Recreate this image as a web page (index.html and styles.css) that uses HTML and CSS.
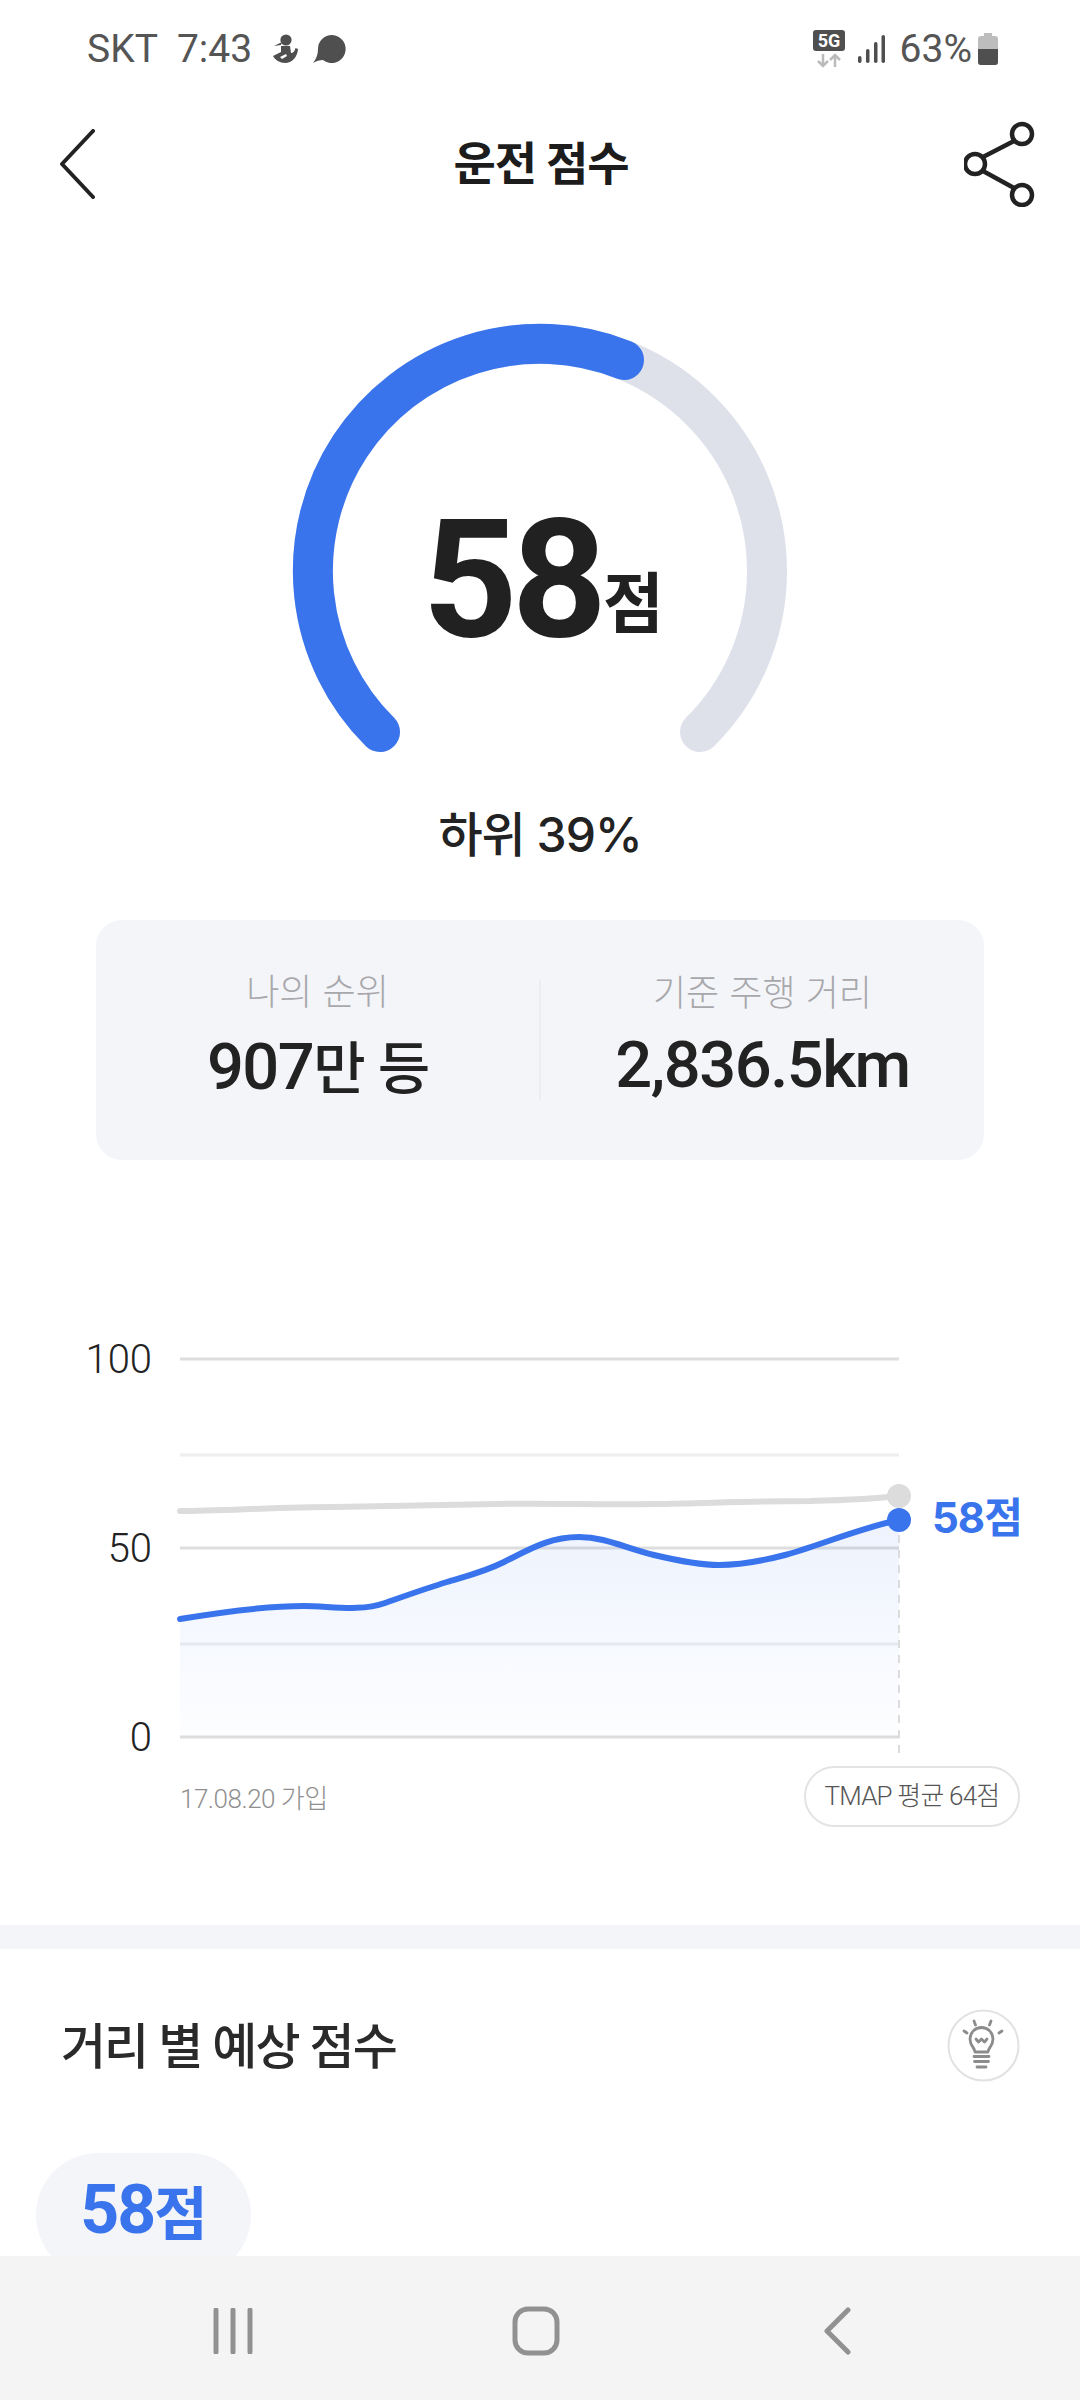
FILE: index.html
```html
<!DOCTYPE html>
<html lang="ko">
<head>
    <meta charset="UTF-8">
    <meta name="viewport" content="width=device-width, initial-scale=1.0">
    <title>운전 점수</title>
    <link rel="stylesheet" href="styles.css">
</head>
<body>
    <div class="screen">
        <div class="status">
            <div class="status-left">
                <span class="carrier">SKT</span>
                <span class="clock">7:43</span>
                <svg class="ico-person" width="26" height="30" viewBox="0 0 26 30">
                    <circle cx="14" cy="6" r="5.6" fill="#4f4f4f"/>
                    <path d="M10 8 L2 12 L9 11 Z" fill="#4f4f4f"/>
                    <path d="M9 12 H18 L19 19 C21 19 23 17 23.500 14 L26 15 C25.500 23 20 29 13 29 C8 29 3 26 1 22 L9 18 Z" fill="#4f4f4f"/>
                    <path d="M8 23 L14 20 L15 22 L10 25 Z" fill="#fff"/>
                </svg>
                <svg class="ico-bubble" width="34" height="30" viewBox="0 0 34 30">
                    <path d="M19 1 A14 14 0 1 1 10 26 C7 26 3 27 0 29 C3 25 5 21 5 15 A14 14 0 0 1 19 1 Z" fill="#4f4f4f"/>
                </svg>
            </div>
            <div class="status-right">
                <svg class="ico-5g" width="32" height="38" viewBox="0 0 32 38">
                    <rect x="0" y="0" width="32" height="21" rx="3" fill="#4f4f4f"/>
                    <text x="16" y="17" text-anchor="middle" class="net-label">5G</text>
                    <path d="M10 24 V36 M5 31 L10 36 L15 31" fill="none" stroke="#bbb" stroke-width="2.500"/>
                    <path d="M22 37 V25 M17 30 L22 25 L27 30" fill="none" stroke="#bbb" stroke-width="2.500"/>
                </svg>
                <svg class="ico-signal" width="27" height="30" viewBox="0 0 27 30">
                    <rect x="0" y="22" width="3.500" height="7" rx="1.700" fill="#4f4f4f"/>
                    <rect x="8" y="15" width="3.500" height="14" rx="1.700" fill="#4f4f4f"/>
                    <rect x="16" y="8" width="3.500" height="21" rx="1.700" fill="#4f4f4f"/>
                    <rect x="23.500" y="1" width="3.500" height="28" rx="1.700" fill="#4f4f4f"/>
                </svg>
                <span class="battery-pct">63%</span>
                <svg class="ico-battery" width="20" height="32" viewBox="0 0 20 32">
                    <path d="M6 0 H14 V3 H17 Q20 3 20 6 V29 Q20 32 17 32 H3 Q0 32 0 29 V6 Q0 3 3 3 H6 Z" fill="#bdbdbd"/>
                    <path d="M0 16 H20 V29 Q20 32 17 32 H3 Q0 32 0 29 Z" fill="#4f4f4f"/>
                </svg>
            </div>
        </div>

        <div class="topbar">
            <svg class="ico-back" width="37" height="70" viewBox="0 0 37 70">
                <path d="M34 2 L3 35 L34 68" fill="none" stroke="#222" stroke-width="4" stroke-linecap="round" stroke-linejoin="round"/>
            </svg>
            <h1 class="title">운전 점수</h1>
            <svg class="ico-share" width="72" height="86" viewBox="0 0 72 86">
                <circle cx="58" cy="13" r="10" fill="none" stroke="#222" stroke-width="4.500"/>
                <circle cx="11" cy="43" r="10" fill="none" stroke="#222" stroke-width="4.500"/>
                <circle cx="58" cy="74" r="10" fill="none" stroke="#222" stroke-width="4.500"/>
                <path d="M19 36 L50 20 M19 50 L50 67" fill="none" stroke="#222" stroke-width="4.500"/>
            </svg>
        </div>

        <div class="main">
            <div class="gauge">
                <svg width="520" height="470" viewBox="280 310 520 470">
                    <path d="M380 732 A227 227 0 1 1 700 732" fill="none" stroke="#dee1ea" stroke-width="40" stroke-linecap="round"/>
                    <path d="M380 732 A227 227 0 0 1 624 360" fill="none" stroke="#3974ed" stroke-width="40" stroke-linecap="round"/>
                </svg>
                <div class="gauge-score"><span class="score-num">58</span><span class="score-unit">점</span></div>
            </div>
            <div class="rank">하위 39%</div>

            <div class="card">
                <div class="card-col">
                    <div class="card-label">나의 순위</div>
                    <div class="card-value">907<span class="kr">만 등</span></div>
                </div>
                <div class="card-line"></div>
                <div class="card-col">
                    <div class="card-label">기준 주행 거리</div>
                    <div class="card-value">2,836.5km</div>
                </div>
            </div>

            <svg class="chart" width="1080" height="510" viewBox="0 1330 1080 510">
                <defs>
                    <linearGradient id="areaFill" x1="0" y1="0" x2="0" y2="1">
                        <stop offset="0" stop-color="#3974ed" stop-opacity="0.09"/>
                        <stop offset="1" stop-color="#3974ed" stop-opacity="0.01"/>
                    </linearGradient>
                </defs>
                <path class="grid" d="M180 1359 H899 M180 1548 H899 M180 1737 H899"/>
                <path class="grid-soft" d="M180 1455 H899 M180 1644 H899"/>
                <path class="area" d="M180 1619 C222 1612 265 1606 304 1606 C330 1606 360 1612 385 1603 C405 1596 427 1588 447 1582 C467 1576 484 1572 504 1562 C530 1549 550 1537 579 1537 C605 1537 625 1548 654 1555 C675 1560 697 1565 719 1565 C742 1565 762 1561 785 1555 C815 1547 860 1528 899 1520 V1737 H180 Z"/>
                <path class="dash" d="M899 1520 V1760"/>
                <path class="line-avg" d="M180 1511 C220 1511 280 1507 335 1507 C400 1506 450 1505 497 1504 C550 1503 600 1505 654 1504 C710 1503 760 1501 810 1501 C850 1500 875 1499 899 1496"/>
                <path class="line-me" d="M180 1619 C222 1612 265 1606 304 1606 C330 1606 360 1612 385 1603 C405 1596 427 1588 447 1582 C467 1576 484 1572 504 1562 C530 1549 550 1537 579 1537 C605 1537 625 1548 654 1555 C675 1560 697 1565 719 1565 C742 1565 762 1561 785 1555 C815 1547 860 1528 899 1520"/>
                <circle cx="899" cy="1496" r="12" fill="#dcdcdc"/>
                <circle cx="899" cy="1520" r="12" fill="#3974ed"/>
                <text class="axis" x="152" y="1373">100</text>
                <text class="axis" x="152" y="1562">50</text>
                <text class="axis" x="152" y="1751">0</text>
                <text class="me-label" x="932" y="1533">58점</text>
                <text class="joined" x="180" y="1808">17.08.20 가입</text>
                <rect class="avg-pill" x="805" y="1767" width="214" height="59" rx="29.500"/>
                <text class="avg-text" x="912" y="1805">TMAP 평균 64점</text>
            </svg>

            <div class="band"></div>

            <div class="section-head">
                <h2 class="section-title">거리 별 예상 점수</h2>
                <svg class="ico-bulb" width="73" height="73" viewBox="0 0 73 73">
                    <circle cx="36.500" cy="36.500" r="35" fill="#fff" stroke="#e2e2e2" stroke-width="2"/>
                    <g fill="none" stroke="#8c8c8c" stroke-width="2.800" stroke-linecap="round" stroke-linejoin="round">
                        <path d="M28 43 C28 39 23 37 23 30 A11.500 11.500 0 0 1 46 30 C46 37 41 39 41 43 Z"/>
                        <path d="M27 47.500 H42 M27.500 52.500 H41.500 M30 58 H39"/>
                        <path d="M27 12 L28.500 16 M44 12 L42.500 16 M17 22 L20 24 M55 22 L52 24"/>
                        <path d="M29 30 L31.500 33 L34.500 30 L37.500 33 L40 30"/>
                    </g>
                </svg>
            </div>

            <div class="score-pill">58<span class="kr">점</span></div>
        </div>

        <div class="navbar">
            <svg width="40" height="46" viewBox="0 0 40 46">
                <path d="M3 2 V44 M20 2 V44 M37 2 V44" fill="none" stroke="#919191" stroke-width="5" stroke-linecap="round"/>
            </svg>
            <svg class="nav-home" width="48" height="50" viewBox="0 0 48 50">
                <rect x="3" y="3" width="42" height="44" rx="13" fill="none" stroke="#919191" stroke-width="5"/>
            </svg>
            <svg width="27" height="48" viewBox="0 0 27 48">
                <path d="M24 3 L3 24 L24 45" fill="none" stroke="#919191" stroke-width="5" stroke-linecap="round" stroke-linejoin="round"/>
            </svg>
        </div>
    </div>
</body>
</html>
```

FILE: styles.css
```css
* {
    box-sizing: border-box;
}
body {
    margin: 0;
    padding: 0;
    background-color: #fff;
    font-family: Inter, "Noto Sans CJK KR", sans-serif;
    color: #222;
}
.screen {
    width: 1080px;
    height: 2400px;
    display: flex;
    flex-direction: column;
    overflow: hidden;
}

/* status bar */
.status {
    height: 98px;
    flex: none;
    display: flex;
    align-items: center;
    justify-content: space-between;
    padding: 0 82px 0 87px;
    font-family: Roboto, sans-serif;
    font-size: 39px;
    color: #555;
}
.status-left,
.status-right {
    display: flex;
    align-items: center;
}
.clock {
    margin-left: 19px;
}
.ico-person {
    margin-left: 20px;
}
.ico-bubble {
    margin-left: 15px;
}
.ico-signal {
    margin-left: 13px;
}
.battery-pct {
    margin-left: 15px;
}
.ico-battery {
    margin-left: 6px;
}
.net-label {
    font-family: Roboto, sans-serif;
    font-size: 18px;
    font-weight: 700;
    fill: #fff;
}

/* top bar */
.topbar {
    height: 132px;
    flex: none;
    display: flex;
    align-items: center;
    justify-content: space-between;
    padding: 0 44px 0 59px;
}
.title {
    margin: 0 0 8px 22px;
    font-size: 46px;
    font-weight: 700;
    letter-spacing: -1px;
    color: #1c1c1c;
}

.main {
    flex: 1;
    min-height: 0;
    overflow: hidden;
}

/* gauge */
.gauge {
    position: relative;
    width: 520px;
    height: 470px;
    margin: 80px auto 0;
}
.gauge svg {
    display: block;
}
.gauge-score {
    position: absolute;
    left: 0;
    right: 0;
    top: 170px;
    text-align: center;
    line-height: 200px;
}
.score-num {
    font-family: Roboto, sans-serif;
    font-size: 166px;
    font-weight: 700;
    letter-spacing: -6px;
    color: #212121;
}
.score-unit {
    font-size: 66px;
    font-weight: 700;
    margin-left: 2px;
    letter-spacing: -6px;
    vertical-align: 9px;
    color: #212121;
}
.rank {
    margin-top: 25px;
    height: 60px;
    line-height: 60px;
    text-align: center;
    font-size: 48px;
    font-weight: 500;
    letter-spacing: -1px;
}

/* rank card */
.card {
    margin: 55px 96px 0;
    height: 240px;
    background-color: #f4f5f9;
    border-radius: 26px;
    display: flex;
    align-items: center;
}
.card-col {
    flex: 1;
    text-align: center;
    padding-bottom: 8px;
}
.card-line {
    width: 2px;
    height: 120px;
    background-color: #ecedf0;
}
.card-label {
    font-size: 36px;
    font-weight: 300;
    line-height: 44px;
    color: #a8a8ac;
}
.card-value {
    margin-top: 14px;
    font-family: Roboto, "Noto Sans CJK KR", sans-serif;
    font-size: 65px;
    font-weight: 500;
    line-height: 72px;
    letter-spacing: -1.5px;
    color: #222;
}
.card-value .kr {
    font-family: "Noto Sans CJK KR", sans-serif;
    font-size: 57px;
    letter-spacing: -2px;
}

/* chart */
.chart {
    display: block;
    margin-top: 170px;
}
.grid,
.grid-soft,
.dash {
    fill: none;
    stroke-width: 3;
}
.grid {
    stroke: #dedede;
}
.grid-soft {
    stroke: #eeeeef;
}
.dash {
    stroke: #dcdcdc;
    stroke-width: 2;
    stroke-dasharray: 8 7;
}
.area {
    fill: url(#areaFill);
}
.line-avg,
.line-me {
    fill: none;
    stroke-width: 6;
    stroke-linecap: round;
}
.line-avg {
    stroke: #dcdcdc;
}
.line-me {
    stroke: #3974ed;
}
.axis {
    font-family: Roboto, sans-serif;
    font-size: 40px;
    font-weight: 300;
    text-anchor: end;
    fill: #222;
}
.me-label {
    font-size: 42px;
    font-weight: 700;
    letter-spacing: -1px;
    fill: #3974ed;
}
.joined {
    font-family: Roboto, "Noto Sans CJK KR", sans-serif;
    font-size: 26px;
    font-weight: 300;
    letter-spacing: -0.5px;
    fill: #8f8f8f;
}
.avg-pill {
    fill: #fff;
    stroke: #e3e3e3;
    stroke-width: 2;
}
.avg-text {
    font-family: Roboto, "Noto Sans CJK KR", sans-serif;
    font-size: 26px;
    font-weight: 300;
    text-anchor: middle;
    letter-spacing: -0.8px;
    fill: #555;
}

/* distance section */
.band {
    margin-top: 85px;
    height: 24px;
    background-color: #f4f5f9;
}
.section-head {
    height: 192px;
    display: flex;
    align-items: center;
    justify-content: space-between;
    padding: 0 60px 0 61px;
}
.section-title {
    margin: 0 0 6px;
    font-size: 49px;
    font-weight: 500;
    letter-spacing: -2px;
    color: #2a2a2a;
}
.score-pill {
    margin: 12px 0 0 36px;
    width: 215px;
    height: 124px;
    padding-bottom: 10px;
    border-radius: 62px;
    background-color: #f4f5f9;
    display: flex;
    align-items: center;
    justify-content: center;
    font-family: Roboto, sans-serif;
    font-size: 68px;
    font-weight: 700;
    letter-spacing: -2px;
    color: #3974ed;
}
.score-pill .kr {
    font-family: "Noto Sans CJK KR", sans-serif;
    font-size: 58px;
    letter-spacing: -1px;
}

/* android nav */
.navbar {
    height: 144px;
    padding: 6px 229px 0 213px;
    flex: none;
    background-color: #f4f4f5;
    display: flex;
    align-items: center;
    justify-content: space-between;
}
.nav-home {
    margin-left: -6px;
}
```
